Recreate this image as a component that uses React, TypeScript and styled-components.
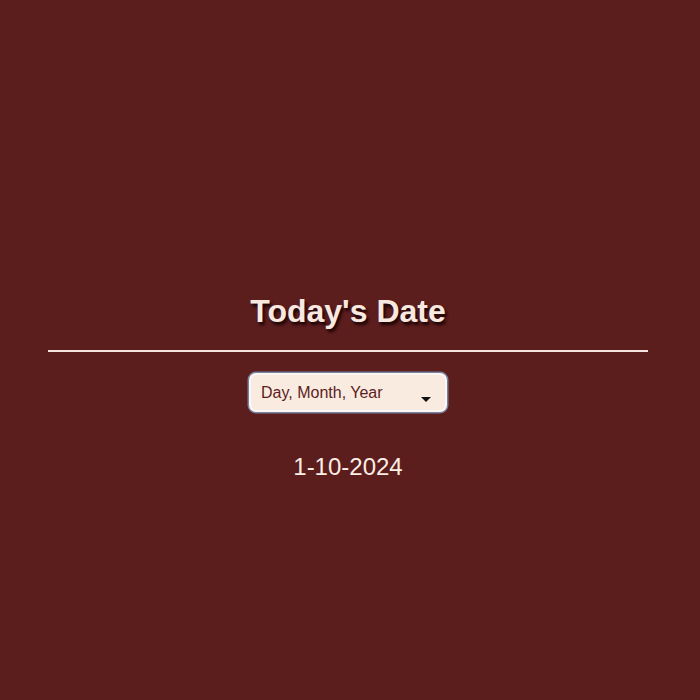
import { FC, useState } from "react"
import styled, { createGlobalStyle } from "styled-components"

const GlobalStyle = createGlobalStyle`
  html, body {
    margin: 0;
    padding: 0;
    background-color: #5c1d1d;
    font-family: "Liberation Sans", Arial, sans-serif;
  }
`

const Page = styled.main`
  display: flex;
  flex-direction: column;
  align-items: center;
  min-height: 700px;
  padding: 293px 4px 0 0;
  box-sizing: border-box;
`
const Title = styled.h1`
  margin: 0;
  font-size: 32px;
  line-height: 37px;
  font-weight: bold;
  color: #f8e9e0;
  text-shadow: 2px 3px 3px #1a0404;
`
const Divider = styled.hr`
  width: 600px;
  height: 2px;
  margin: 20px 0 21px;
  border: none;
  background-color: #f4e4e0;
`
const SelectWrap = styled.div`
  position: relative;
  width: 198px;
  height: 39px;
`
const Select = styled.select`
  appearance: none;
  width: 100%;
  height: 100%;
  padding: 0 30px 1px 10px;
  border: 2px solid #fdf6f2;
  border-radius: 7px;
  box-shadow: 0 0 0 1.5px #76829f;
  background-color: #faebe1;
  color: #5c1d1d;
  font-family: "Liberation Sans", Arial, sans-serif;
  font-size: 16px;
  outline: none;
`
const Arrow = styled.span`
  position: absolute;
  right: 16px;
  top: 24px;
  width: 0;
  height: 0;
  border-left: 5px solid transparent;
  border-right: 5px solid transparent;
  border-top: 5px solid #111;
  pointer-events: none;
`
const DateText = styled.p`
  margin: 41px 0 0;
  font-size: 24px;
  line-height: 28px;
  color: #fbeee6;
`

const formats: Record<string, string> = {
  dmy: "1-10-2024",
  mdy: "10-1-2024",
  ymd: "2024-10-1",
}

const App: FC = () => {
  const [format, setFormat] = useState("dmy")
  return (
    <>
      <GlobalStyle />
      <Page>
        <Title>Today's Date</Title>
        <Divider />
        <SelectWrap>
          <Select value={format} onChange={(e) => setFormat(e.target.value)}>
            <option value='dmy'>Day, Month, Year</option>
            <option value='mdy'>Month, Day, Year</option>
            <option value='ymd'>Year, Month, Day</option>
          </Select>
          <Arrow />
        </SelectWrap>
        <DateText>{formats[format]}</DateText>
      </Page>
    </>
  )
}

export default App
